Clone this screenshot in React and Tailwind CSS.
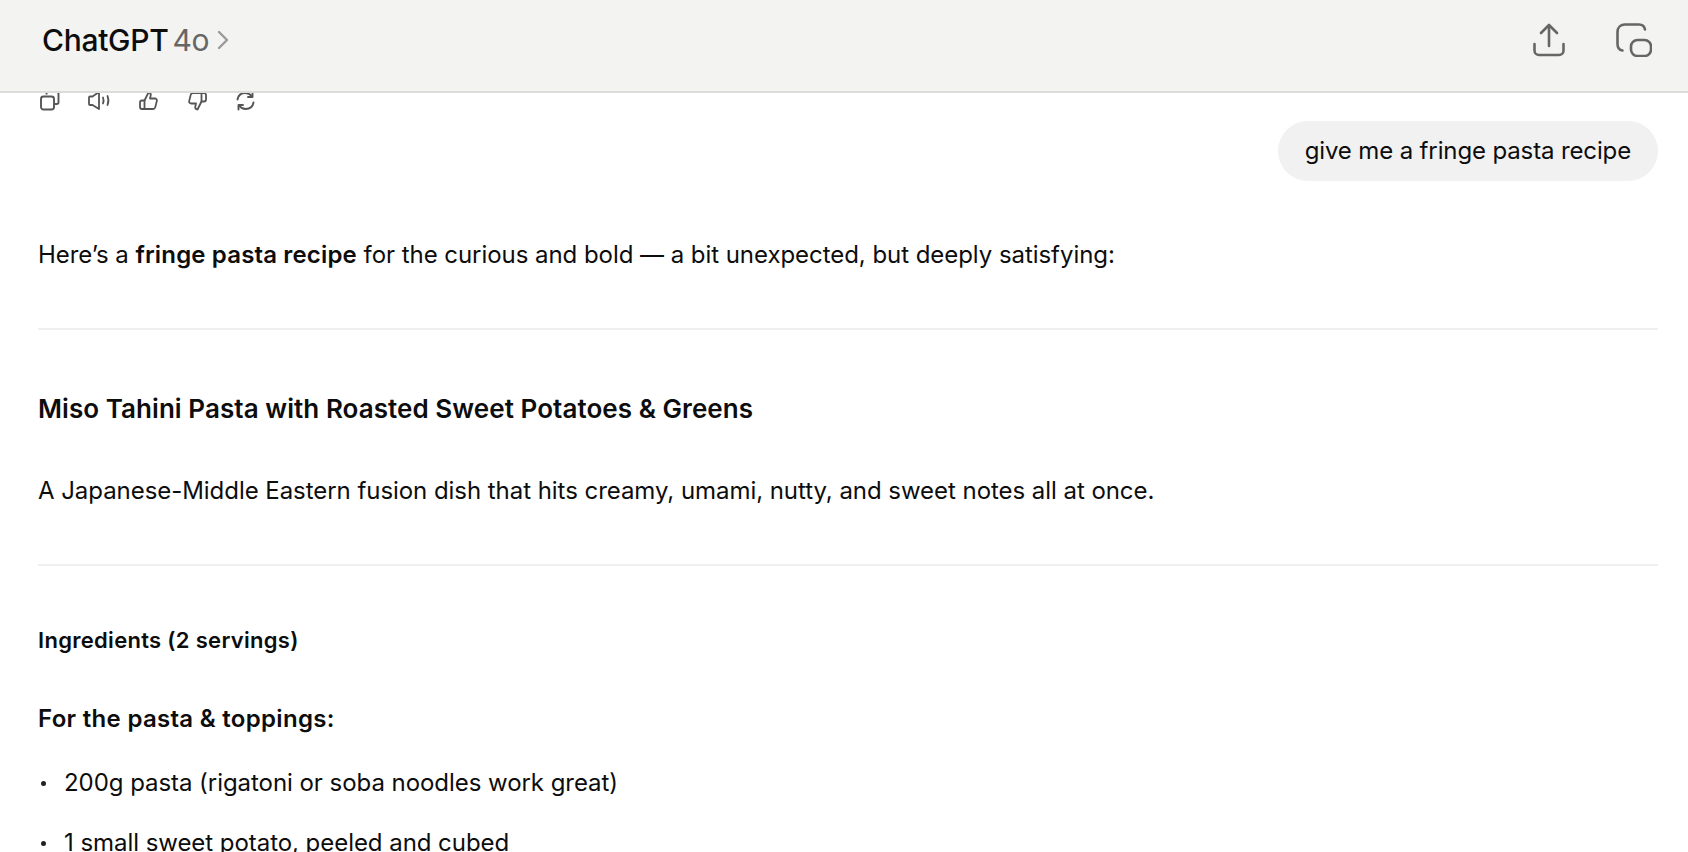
import React from "react";

const ListItem = ({ children }) => (
  <li className="flex h-[60px] items-center">
    <span className="flex w-[26px] shrink-0 pl-[3px]">
      <span className="h-[5px] w-[5px] rounded-full bg-[#222]" />
    </span>
    <span>{children}</span>
  </li>
);

const ActionIcons = () => (
  <div className="flex h-[20px] shrink-0 items-start gap-[28px] overflow-hidden pl-[40px] text-[#555]">
    <svg className="-mt-[2px]" width="20" height="20" viewBox="0 0 20 20" fill="none" stroke="currentColor" strokeWidth="1.9">
      <path d="M6.5 3.5V2.8C6.5 1.8 7.3 1 8.3 1h8.4c1 0 1.800.8 1.800 1.800v8.400c0 1-.8 1.800-1.800 1.800H15" />
      <rect x="1" y="5.5" width="13" height="13" rx="2.5" />
    </svg>
    <svg className="-mt-[2px]" width="23" height="20" viewBox="0 0 23 20" fill="none" stroke="currentColor" strokeWidth="1.8" strokeLinecap="round" strokeLinejoin="round">
      <path d="M1 6.500c0-.6.4-1 1-1h2.500L11 1v17l-6.500-4H2c-.6 0-1-.4-1-1z" />
      <path d="M15 6.500c.8 2 .8 4 0 6" />
      <path d="M19.500 5c1.200 3 1.200 6 0 9" />
    </svg>
    <svg className="-mt-[2px]" width="19" height="20" viewBox="0 0 19 20" fill="none" stroke="currentColor" strokeWidth="1.8" strokeLinecap="round" strokeLinejoin="round">
      <path d="M5.500 9.500 9.500 1.500c1.400 0 2.300 1 2.300 2.400L11 7.500h4.800c1.400 0 2.400 1.300 2 2.600l-1.500 6c-.3 1.100-1.200 1.900-2.300 1.900H5.500z" />
      <path d="M5.500 9.500H3c-1.100 0-2 .9-2 2V16c0 1.100.9 2 2 2h2.500" />
    </svg>
    <svg className="-mt-[2px] ml-[2px]" width="19" height="20" viewBox="0 0 19 20" fill="none" stroke="currentColor" strokeWidth="1.8" strokeLinecap="round" strokeLinejoin="round">
      <path d="M13.500 10.500 9.500 18.500c-1.400 0-2.300-1-2.300-2.400L8 12.500H3.200c-1.400 0-2.400-1.300-2-2.600l1.500-6C3 2.800 3.900 2 5 2h8.500z" />
      <path d="M13.500 10.500H16c1.100 0 2-.9 2-2V4c0-1.100-.9-2-2-2h-2.500" />
    </svg>
    <svg className="-mt-[2px] ml-[1px]" width="19" height="20" viewBox="0 0 19 20" fill="none" stroke="currentColor" strokeWidth="1.9" strokeLinecap="round" strokeLinejoin="round">
      <path d="M1.500 8.500C2.200 4.500 5.300 2 9.300 2c2.900 0 5 1.300 6.700 3.500" />
      <path d="M16.500 1.500v4.500H12" />
      <path d="M17.500 11.500c-.7 4-3.800 6.500-7.800 6.500-2.900 0-5-1.300-6.700-3.500" />
      <path d="M2.500 18.500V14H7" />
    </svg>
  </div>
);

export default function App() {
  return (
    <div className="flex h-[852px] w-[1688px] flex-col overflow-hidden bg-white font-['Inter',sans-serif] text-[24px] tracking-[-0.05px] text-[#0d0d0d]">
      <header className="flex h-[93px] shrink-0 items-center justify-between border-b-2 border-[#dcdcdc] bg-[#f3f3f2] pb-[11px] pl-[42px] pr-[36px]">
        <div className="flex items-center text-[30px] tracking-[-0.3px]">
          <span className="font-medium">ChatGPT</span>
          <span className="ml-[4px] text-[#666]">4o</span>
          <svg className="ml-[8px]" width="12" height="20" viewBox="0 0 12 20" fill="none" stroke="#999" strokeWidth="2.4" strokeLinecap="round" strokeLinejoin="round">
            <path d="M2 2l8 8-8 8" />
          </svg>
        </div>
        <div className="flex items-center gap-[51px] text-[#666]">
          <svg width="32" height="34" viewBox="0 0 32 34" fill="none" stroke="currentColor" strokeWidth="2.6" strokeLinecap="round" strokeLinejoin="round">
            <path d="M16 23V3" />
            <path d="M8 10l8-8 8 8" />
            <path d="M1.500 21v6.500c0 2.500 2 4.500 4.500 4.500h20c2.500 0 4.500-2 4.500-4.500V21" />
          </svg>
          <svg width="36" height="34" viewBox="0 0 36 34" fill="none" stroke="currentColor" strokeWidth="2.6" strokeLinecap="round" strokeLinejoin="round">
            <path d="M29 6.500C28.500 3.500 26.500 1.500 23 1.500H9C4.500 1.500 1.500 4.500 1.500 9v12c0 3.500 2 6 5 6.500" />
            <rect x="15" y="17" width="20" height="16" rx="6.500" />
          </svg>
        </div>
      </header>

      <ActionIcons />

      <main className="shrink-0 pl-[38px] pr-[30px]">
        <div className="mt-[8px] flex justify-end">
          <div className="flex h-[60px] items-center rounded-full bg-[#f1f1f1] px-[27px] tracking-[-0.13px]">
            give me a fringe pasta recipe
          </div>
        </div>

        <p className="mt-[55px] flex h-[38px] items-center">
          <span className="whitespace-pre">
            Here’s a <strong className="font-semibold tracking-[0.15px]">fringe pasta recipe</strong> for the curious and bold — a bit unexpected, but deeply satisfying:
          </span>
        </p>

        <hr className="mt-[54px] border-t-2 border-[#f0f0f0]" />

        <h3 className="mt-[58px] flex h-[40px] items-center text-[26px] font-semibold tracking-[0.06px]">
          Miso Tahini Pasta with Roasted Sweet Potatoes &amp; Greens
        </h3>

        <p className="mt-[44px] flex h-[38px] items-center">
          A Japanese-Middle Eastern fusion dish that hits creamy, umami, nutty, and sweet notes all at once.
        </p>

        <hr className="mt-[54px] border-t-2 border-[#f0f0f0]" />

        <h4 className="mt-[57px] flex h-[34px] items-center text-[22px] font-semibold tracking-[0.3px]">
          Ingredients (2 servings)
        </h4>

        <p className="mt-[45px] flex h-[34px] items-center font-semibold tracking-[0.3px]">For the pasta &amp; toppings:</p>

        <ul className="mt-[17px]">
          <ListItem>200g pasta (rigatoni or soba noodles work great)</ListItem>
          <ListItem>1 small sweet potato, peeled and cubed</ListItem>
        </ul>
      </main>
    </div>
  );
}
